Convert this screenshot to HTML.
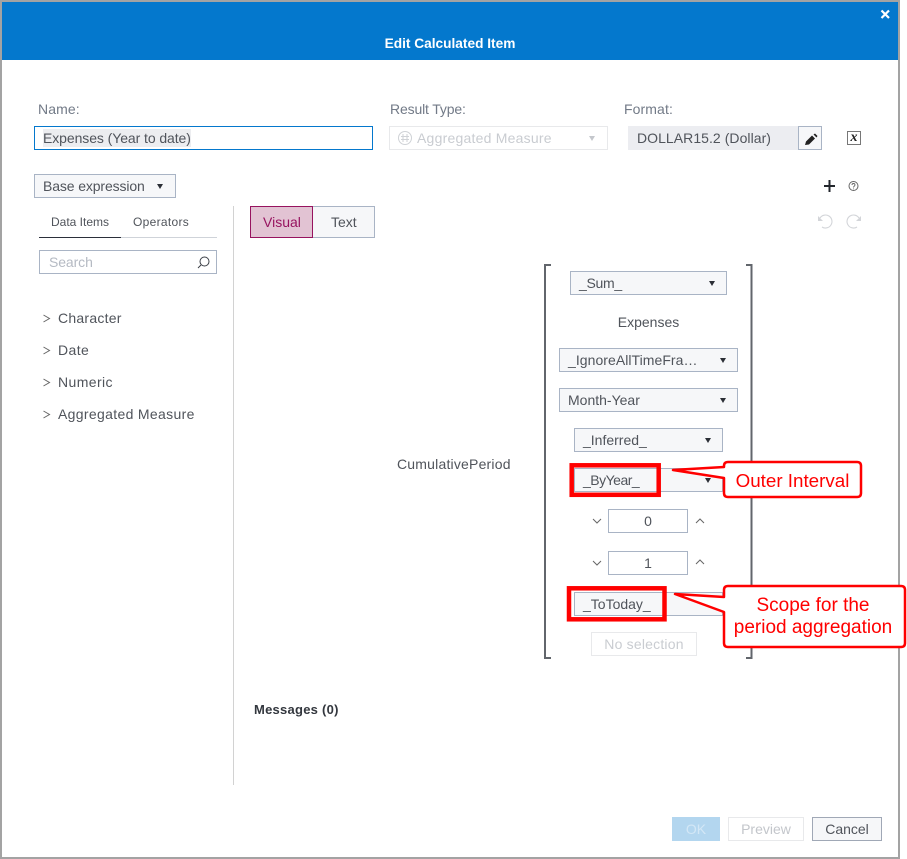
<!DOCTYPE html>
<html><head><meta charset="utf-8"><style>
html,body{margin:0;padding:0;background:#fff}
body{width:907px;height:859px;position:relative;overflow:hidden;font-family:"Liberation Sans",sans-serif;font-size:14px;color:#50545b}
.a,.b,.t{position:absolute;box-sizing:border-box}
.t{white-space:nowrap;line-height:16px}
.b{border:1px solid #a9b4c5;background:#f6f7f9;line-height:22px;white-space:nowrap;padding-left:8px}
.c{position:absolute;width:0;height:0;border-left:3px solid transparent;border-right:3px solid transparent;border-top:5px solid #2b2f36}
.lab{color:#727a87}
.red{color:#f00;font-size:19px;text-align:center;line-height:22px}
svg{position:absolute;left:0;top:0}
</style></head><body>
<div class="a" style="left:0;top:0;width:900px;height:859px;border:2px solid #a3a3a3"></div>
<div class="a" style="left:2px;top:2px;width:896px;height:58px;background:#0478cd"></div>
<div class="t" style="left:2px;width:896px;top:36px;text-align:center;color:#fff;font-weight:bold;font-size:13.7px">Edit Calculated Item</div>

<div class="t lab" style="left:38px;top:101px;letter-spacing:.1px">Name:</div>
<div class="t lab" style="left:390px;top:101px;letter-spacing:-.15px">Result Type:</div>
<div class="t lab" style="left:624px;top:101px;letter-spacing:.1px">Format:</div>

<div class="a" style="left:34px;top:126px;width:339px;height:24px;border:1px solid #0478cd"></div>
<div class="a" style="left:43px;top:129px;width:148px;height:18px;background:#ecedf0"></div>
<div class="t" style="left:43px;top:130px;letter-spacing:-.08px">Expenses (Year to date)</div>

<div class="a" style="left:389px;top:126px;width:219px;height:24px;border:1px solid #e8e9eb"></div>
<div class="t" style="left:417px;top:130px;color:#c9ccd1;letter-spacing:.22px">Aggregated Measure</div>
<div class="c" style="left:589px;top:136px;border-top-color:#c4c7cc"></div>

<div class="a" style="left:628px;top:126px;width:170px;height:24px;background:#ecedf1"></div>
<div class="t" style="left:637px;top:130px;letter-spacing:.05px">DOLLAR15.2 (Dollar)</div>
<div class="b" style="left:798px;top:126px;width:24px;height:24px;padding:0"></div>
<div class="t" style="left:847px;top:131px;width:14px;height:14px;border:1px solid #777;font:italic bold 14px/11px 'Liberation Serif',serif;text-align:center;color:#222;box-sizing:border-box">x</div>

<div class="b" style="left:34px;top:174px;width:142px;height:24px;letter-spacing:-.12px">Base expression</div>
<div class="c" style="left:157px;top:184px"></div>

<div class="t" style="left:51px;top:214px;font-size:12px">Data Items</div>
<div class="t" style="left:133px;top:214px;font-size:12px;letter-spacing:.3px">Operators</div>
<div class="a" style="left:39px;top:237px;width:178px;height:1px;background:#cfd3d9"></div>
<div class="a" style="left:39px;top:237px;width:82px;height:1px;background:#2b2f3a"></div>
<div class="a" style="left:39px;top:250px;width:178px;height:24px;border:1px solid #a9b4c5"></div>
<div class="t" style="left:49px;top:254px;color:#b5bac3;letter-spacing:-.1px">Search</div>

<div class="a" style="left:233px;top:206px;width:1px;height:579px;background:#d2d2d2"></div>

<div class="b" style="left:250px;top:206px;width:63px;height:32px;background:#e2c3d3;border-color:#97135f;color:#97135f;line-height:30px;padding-left:12px;z-index:2">Visual</div>
<div class="b" style="left:313px;top:206px;width:62px;height:32px;border-left:0;line-height:30px;padding-left:18px">Text</div>

<div class="t" style="left:58px;top:310px;letter-spacing:.25px">Character</div>
<div class="t" style="left:58px;top:342px;letter-spacing:.4px">Date</div>
<div class="t" style="left:58px;top:374px;letter-spacing:.4px">Numeric</div>
<div class="t" style="left:58px;top:406px;letter-spacing:.33px">Aggregated Measure</div>

<div class="t" style="left:397px;top:456px;letter-spacing:.2px">CumulativePeriod</div>
<div class="t" style="left:254px;top:702px;font-weight:bold;font-size:13px;color:#33373e;letter-spacing:.25px">Messages (0)</div>

<div class="b" style="left:570px;top:271px;width:157px;height:24px;letter-spacing:-.3px">_Sum_</div>
<div class="c" style="left:709px;top:281px"></div>
<div class="t" style="left:559px;width:179px;text-align:center;top:314px">Expenses</div>
<div class="b" style="left:559px;top:348px;width:179px;height:24px;letter-spacing:.05px">_IgnoreAllTimeFra…</div>
<div class="c" style="left:720px;top:358px"></div>
<div class="b" style="left:559px;top:388px;width:179px;height:24px">Month-Year</div>
<div class="c" style="left:720px;top:398px"></div>
<div class="b" style="left:574px;top:428px;width:149px;height:24px">_Inferred_</div>
<div class="c" style="left:705px;top:438px"></div>
<div class="b" style="left:574px;top:468px;width:149px;height:24px;letter-spacing:-.5px">_ByYear_</div>
<div class="c" style="left:705px;top:478px"></div>
<div class="b" style="left:608px;top:509px;width:80px;height:24px;background:#fff;padding:0;text-align:center">0</div>
<div class="b" style="left:608px;top:551px;width:80px;height:24px;background:#fff;padding:0;text-align:center">1</div>
<div class="b" style="left:574px;top:592px;width:149px;height:24px">_ToToday_</div>
<div class="b" style="left:591px;top:632px;width:106px;height:24px;background:#fff;border-color:#e8e9eb;color:#c9ccd1;padding:0;text-align:center;letter-spacing:.2px">No selection</div>

<div class="a" style="left:672px;top:817px;width:48px;height:24px;background:#b3d6ef;color:#d3e7f6;text-align:center;line-height:24px">OK</div>
<div class="b" style="left:728px;top:817px;width:76px;height:24px;background:#fff;border-color:#e8e9eb;color:#c3c6cb;padding:0;text-align:center">Preview</div>
<div class="b" style="left:812px;top:817px;width:70px;height:24px;padding:0;text-align:center;border-color:#a0a8b6">Cancel</div>

<svg width="907" height="859" viewBox="0 0 907 859" fill="none" style="z-index:3">
<!-- close -->
<path d="M881.500 10.500l7.500 7.500M889 10.500l-7.500 7.500" stroke="#fff" stroke-width="2.200"/>
<!-- aggregated icon -->
<circle cx="405" cy="138" r="6.500" stroke="#cfd2d6"/>
<path d="M403 134v8M407 134v8M401 136.500h8M401 139.500h8" stroke="#cfd2d6"/>
<!-- pencil -->
<path d="M805 145l1-3.500 6-6 3 3-6 6z" fill="#222"/><path d="M813.500 134.500l1.500-1 2.500 2.500-1 1.500z" fill="#222"/>
<!-- plus, help -->
<path d="M829.500 180v12M824 186h11" stroke="#22262c" stroke-width="2"/>
<circle cx="853.500" cy="186" r="4.500" stroke="#666"/>
<path d="M852 185c0-2 3-2 3 0 0 1-1.500 1-1.500 2.500M853.500 188.500v.8" stroke="#666" stroke-width=".9"/>
<!-- undo redo -->
<path d="M820 218a6.500 6.500 0 1 1 2 9" stroke="#d3d5d9" stroke-width="1.100"/><path d="M818 216v5h5z" fill="#d3d5d9"/>
<path d="M859 218a6.500 6.500 0 1 0 -2 9" stroke="#d3d5d9" stroke-width="1.100"/><path d="M861 216v5h-5z" fill="#d3d5d9"/>
<!-- search -->
<circle cx="204.500" cy="261.500" r="4.500" stroke="#3a3e45" stroke-width="1"/>
<path d="M201 265l-3 3" stroke="#3a3e45" stroke-width="1"/>
<!-- tree chevrons -->
<path d="M43.500 315l6 3.500-6 3.500M43.500 347l6 3.500-6 3.500M43.500 379l6 3.500-6 3.500M43.500 411l6 3.500-6 3.500" stroke="#666"/>
<!-- brackets -->
<path d="M551 265h-6v393h6M746 265h5.500v393h-5.500" stroke="#62666c" stroke-width="2"/>
<!-- steppers -->
<path d="M593 519l4 4 4-4M593 561l4 4 4-4" stroke="#666"/>
<path d="M696 523l4-4 4 4M696 564l4-4 4 4" stroke="#666"/>
<!-- red boxes -->
<rect x="571.700" y="465.300" width="87" height="29.500" stroke="#f00" stroke-width="4.500"/>
<rect x="569" y="588.300" width="95.500" height="31" stroke="#f00" stroke-width="4.500"/>
<!-- callouts -->
<path d="M724 466q0-4 4-4h129q4 0 4 4v27q0 4-4 4h-129q-4 0-4-4v-15l-51-8 51-3z" fill="#fff" stroke="#f00" stroke-width="2.500" stroke-linejoin="round"/>
<path d="M724 590q0-4 4-4h173q4 0 4 4v53q0 4-4 4h-173q-4 0-4-4v-31l-49-18 49 3z" fill="#fff" stroke="#f00" stroke-width="2.500" stroke-linejoin="round"/>
</svg>
<div class="t red" style="left:724px;width:137px;top:470px;z-index:4;font-size:18.800px">Outer Interval</div>
<div class="t red" style="left:722px;width:182px;top:595px;z-index:4">Scope for the<br>period aggregation</div>
</body></html>
